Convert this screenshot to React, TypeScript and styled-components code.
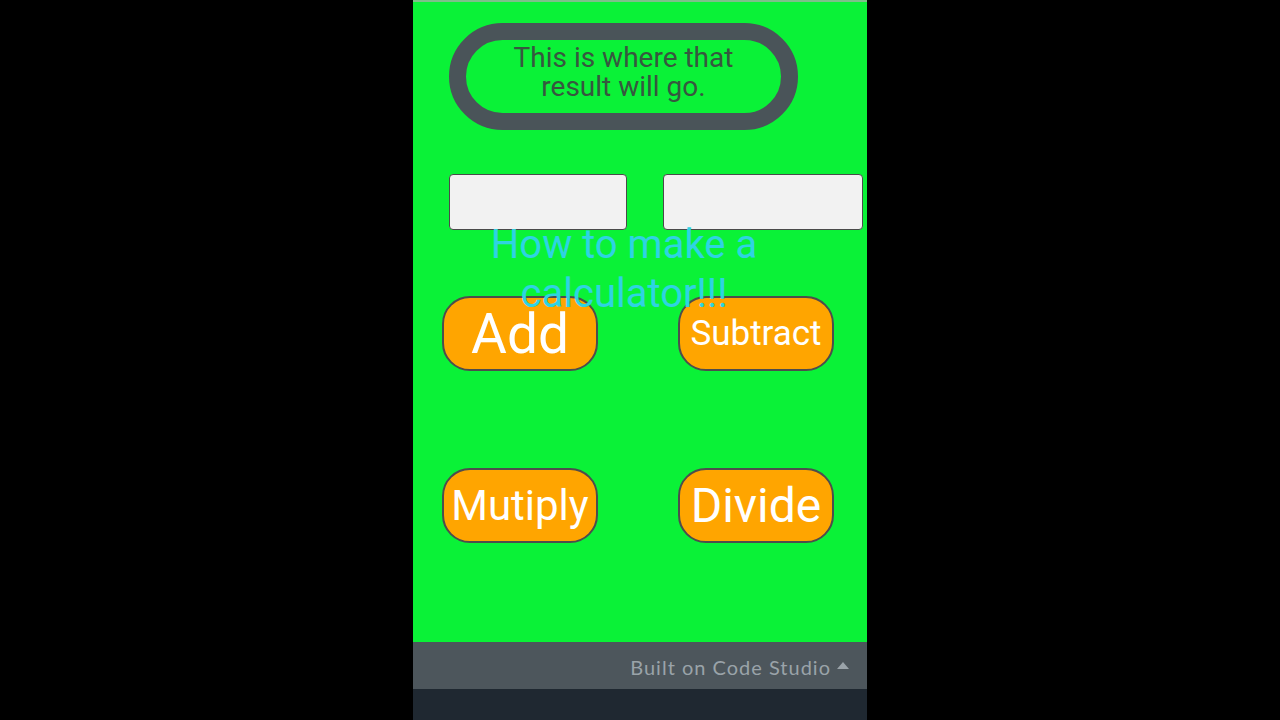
import React from "react";
import styled, {createGlobalStyle} from "styled-components";

const GlobalStyle = createGlobalStyle`
  html, body {
    margin: 0;
    padding: 0;
    background: #000000;
  }
  * {
    box-sizing: border-box;
  }
`

const Page = styled.div`
  display: flex;
  justify-content: center;
  width: 1280px;
  height: 720px;
  background: #000000;
  overflow: hidden;
`

const Phone = styled.div`
  position: relative;
  display: flex;
  flex-direction: column;
  width: 454px;
  height: 720px;
  border-top: 2px solid #7fbf8a;
  background: #1f2831;
`

const Screen = styled.div`
  display: flex;
  flex-direction: column;
  height: 640px;
  background: #0af237;
  padding: 21px 0 0 0;
`

const ResultPill = styled.div`
  display: flex;
  align-items: center;
  justify-content: center;
  margin-left: 36px;
  width: 349px;
  height: 107px;
  padding-bottom: 10px;
  border: 17px solid #4a5459;
  border-radius: 54px;
  font-family: Roboto, "Liberation Sans", sans-serif;
  font-size: 28px;
  line-height: 29px;
  color: #37573f;
  text-align: center;
`

const InputRow = styled.div`
  display: flex;
  gap: 36px;
  margin: 44px 0 0 36px;
`

const Field = styled.input<{ $width: number }>`
  width: ${p => p.$width}px;
  height: 56px;
  background: #f2f2f2;
  border: 1px solid #4a4a4a;
  border-radius: 4px;
  outline: none;
`

const ButtonGrid = styled.div`
  display: grid;
  grid-template-columns: 156px 156px;
  column-gap: 80px;
  row-gap: 97px;
  margin: 66px 0 0 29px;
`

const CalcButton = styled.button<{ $size: number }>`
  display: flex;
  align-items: center;
  justify-content: center;
  height: 75px;
  padding: 0;
  background: #ffa500;
  border: 2px solid #4d4d4d;
  border-radius: 28px;
  color: #ffffff;
  font-family: Roboto, "Liberation Sans", sans-serif;
  font-size: ${p => p.$size}px;
  white-space: nowrap;
`

const Title = styled.div`
  position: absolute;
  top: 218px;
  left: 61px;
  width: 300px;
  font-family: Roboto, "Liberation Sans", sans-serif;
  font-size: 40px;
  line-height: 49px;
  color: #2fd3e2;
  text-align: center;
  pointer-events: none;
`

const Footer = styled.div`
  display: flex;
  align-items: center;
  justify-content: flex-end;
  gap: 6px;
  height: 47px;
  padding: 3px 18px 0 0;
  background: #4d565c;
  font-family: Lato, "Open Sans", sans-serif;
  font-size: 20px;
  letter-spacing: 1px;
  color: #9aa3a9;
`

const Caret = styled.span`
  width: 0;
  height: 0;
  border-left: 6px solid transparent;
  border-right: 6px solid transparent;
  border-bottom: 7px solid #9aa3a9;
  margin-top: -3px;
`

const buttons = [
    {label: "Add", size: 55},
    {label: "Subtract", size: 35},
    {label: "Mutiply", size: 42},
    {label: "Divide", size: 48},
]

const App = () => {
    return (
        <Page>
            <GlobalStyle/>
            <Phone>
                <Screen>
                    <ResultPill>This is where that<br/>result will go.</ResultPill>
                    <InputRow>
                        <Field $width={178} type={"text"}/>
                        <Field $width={200} type={"text"}/>
                    </InputRow>
                    <ButtonGrid>
                        {buttons.map(b => (
                            <CalcButton key={b.label} $size={b.size}>{b.label}</CalcButton>
                        ))}
                    </ButtonGrid>
                </Screen>
                <Title>How to make a<br/>calculator!!!</Title>
                <Footer>
                    Built on Code Studio
                    <Caret/>
                </Footer>
            </Phone>
        </Page>
    );
}

export default App;
